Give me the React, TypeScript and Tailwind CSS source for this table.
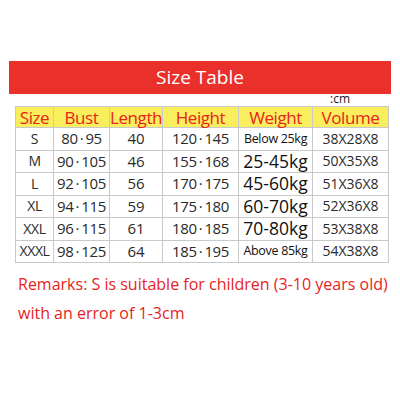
import React from 'react';

const cols = [
  { label: 'Size', w: 'w-[38px]' },
  { label: 'Bust', w: 'w-[56px]' },
  { label: 'Length', w: 'w-[53px]' },
  { label: 'Height', w: 'w-[76px]' },
  { label: 'Weight', w: 'w-[74px]' },
  { label: 'Volume', w: 'w-[76px]' },
];

const rows = [
  { size: 'S', bust: '80\u2009·\u200995', length: '40', height: '120\u2009·\u2009145', weight: 'Below 25kg', small: true, volume: '38X28X8' },
  { size: 'M', bust: '90\u2009·\u2009105', length: '46', height: '155\u2009·\u2009168', weight: '25-45kg', small: false, volume: '50X35X8' },
  { size: 'L', bust: '92\u2009·\u2009105', length: '56', height: '170\u2009·\u2009175', weight: '45-60kg', small: false, volume: '51X36X8' },
  { size: 'XL', bust: '94\u2009·\u2009115', length: '59', height: '175\u2009·\u2009180', weight: '60-70kg', small: false, volume: '52X36X8' },
  { size: 'XXL', bust: '96\u2009·\u2009115', length: '61', height: '180\u2009·\u2009185', weight: '70-80kg', small: false, volume: '53X38X8' },
  { size: 'XXXL', bust: '98\u2009·\u2009125', length: '64', height: '185\u2009·\u2009195', weight: 'Above 85kg', small: true, volume: '54X38X8' },
];

const cell = 'border border-[#c9c9c9] text-center p-0 leading-none';

export default function App() {
  return (
    <div className="w-[400px] h-[400px] bg-white pt-[61px] font-['Open_Sans',sans-serif]">
      <div className="mx-[9px] h-[33px] bg-[#e9302a] flex items-center justify-center text-white text-[19px]">
        Size Table
      </div>
      <div className="h-[12px] flex justify-end items-start pr-[50px] text-[12px] leading-[10px] text-[#222]">:cm</div>
      <table className="ml-[15px] w-[373px] border-collapse table-fixed">
        <thead>
          <tr className="h-[21px] bg-[#f9ee5e]">
            {cols.map(c => (
              <th key={c.label} className={`${cell} ${c.w} font-normal text-[#e8231b] text-[17px] tracking-tight`}>
                {c.label}
              </th>
            ))}
          </tr>
        </thead>
        <tbody className="text-[#2a2a2a]">
          {rows.map(r => (
            <tr key={r.size} className="h-[22.5px]">
              <td className={`${cell} text-[14px] tracking-tight`}>{r.size}</td>
              <td className={`${cell} text-[15px] tracking-tight`}>{r.bust}</td>
              <td className={`${cell} text-[15px]`}>{r.length}</td>
              <td className={`${cell} text-[15px] tracking-tight`}>{r.height}</td>
              <td className={`${cell} ${r.small ? 'text-[12.5px] tracking-tight' : 'text-[17.5px]'} text-[#111]`}>{r.weight}</td>
              <td className={`${cell} text-[14px]`}>{r.volume}</td>
            </tr>
          ))}
        </tbody>
      </table>
      <div className="pl-[18px] pt-[7px] text-[#e8231b] text-[16px] leading-[29px]">
        <p>Remarks: S is suitable for children (3-10 years old)</p>
        <p>with an error of 1-3cm</p>
      </div>
    </div>
  );
}
